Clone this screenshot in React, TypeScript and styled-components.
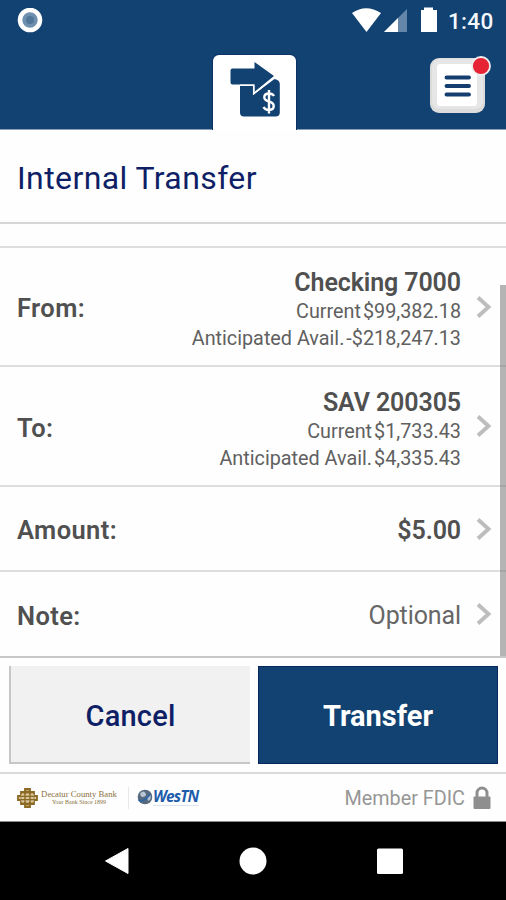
import React from "react";
import styled, { createGlobalStyle } from "styled-components";

const NAVY = "#124272";
const INK = "#0f1f66";

const GlobalStyle = createGlobalStyle`
  * { box-sizing: border-box; }
  body { margin: 0; background: #fff; font-family: Roboto, "Liberation Sans", sans-serif; }
  svg { display: block; flex: none; }
`;

const Screen = styled.div`
  width: 506px;
  height: 900px;
  display: flex;
  flex-direction: column;
  overflow: hidden;
  background: #fefefe;
`;

const StatusBar = styled.div`
  height: 42px;
  flex: none;
  display: flex;
  align-items: center;
  justify-content: space-between;
  padding: 0 12px 0 17px;
  background: ${NAVY};
`;

const StatusIcons = styled.div`
  display: flex;
  align-items: center;
`;

const Clock = styled.span`
  width: 46px;
  margin-left: 10px;
  color: #f4f7fb;
  font-size: 22.5px;
  font-weight: 500;
  line-height: 42px;
  letter-spacing: 0.3px;
  white-space: nowrap;
`;

const Header = styled.header`
  height: 88px;
  flex: none;
  display: grid;
  grid-template-columns: 213px 83px 1fr;
  align-items: end;
  background: ${NAVY};
  border-bottom: 1px solid #8a9db5;
`;

const TransferTab = styled.div`
  grid-column: 2;
  height: 75px;
  margin-bottom: -1px;
  border-radius: 6px 6px 0 0;
  background: #fff;
  box-shadow: 0 0 0 1px #0c3166;
  clip-path: inset(-2px -2px 0 -2px);
`;

const MenuButton = styled.button`
  justify-self: end;
  align-self: start;
  margin: 12px 12px 0 0;
  padding: 0;
  border: 0;
  background: none;
`;

const Title = styled.h1`
  height: 94px;
  flex: none;
  margin: 0;
  padding: 1px 17px 0;
  border-bottom: 2px solid #d6d6d6;
  color: ${INK};
  font-size: 32px;
  font-weight: 400;
  line-height: 95px;
  letter-spacing: 0.4px;
`;

const FormArea = styled.main`
  height: 434px;
  flex: none;
  display: grid;
  grid-template-columns: 1fr 6px;
  border-bottom: 2px solid #c8c8c8;
`;

const Rows = styled.div`
  padding-top: 22px;
  margin-right: -6px;
`;

const Row = styled.div<{ $h: number }>`
  height: ${(p) => p.$h}px;
  display: flex;
  align-items: center;
  padding: 0 14px 0 17px;
  border-top: 2px solid #dedede;
  color: #505050;
`;

const Label = styled.span`
  flex: 1;
  padding-top: 3px;
  font-size: 25.5px;
  font-weight: 600;
  line-height: 30px;
  letter-spacing: 0.4px;
`;

const ValueStack = styled.div`
  display: flex;
  flex-direction: column;
  align-items: flex-end;
  margin-right: 15px;
`;

const Value = styled.span<{ $light?: boolean }>`
  padding-top: ${(p) => (p.$light ? "3px" : "5px")};
  font-size: 25px;
  font-weight: ${(p) => (p.$light ? 400 : 600)};
  line-height: 30px;
  letter-spacing: -0.1px;
  color: ${(p) => (p.$light ? "#666" : "#505050")};
`;

const AccountName = styled(Value)`
  padding: 3px 0 0;
`;

const Balance = styled.span`
  display: flex;
  gap: 2px;
  font-size: 19.8px;
  line-height: 27px;
  color: #606060;

  &:last-child {
    margin-bottom: -4px;
  }
`;

const ScrollThumb = styled.div`
  z-index: 1;
  margin-top: 61px;
  background: rgba(100, 100, 100, 0.48);
`;

const Actions = styled.div`
  height: 114px;
  flex: none;
  display: grid;
  grid-template-columns: 241px 240px;
  gap: 8px;
  padding: 8px 0 8px 9px;
`;

const Action = styled.button<{ $primary?: boolean }>`
  padding: ${(p) => (p.$primary ? "2px 0 0" : "3px 0 0")};
  border-style: solid;
  border-width: ${(p) => (p.$primary ? "1px" : "0 0 2px 2px")};
  border-color: ${(p) => (p.$primary ? "#08275f" : "#c6c6c6")};
  background: ${(p) => (p.$primary ? NAVY : "#f1f1f1")};
  color: ${(p) => (p.$primary ? "#fff" : INK)};
  font: ${(p) => (p.$primary ? 700 : 500)} 29px Roboto, "Liberation Sans", sans-serif;
  letter-spacing: ${(p) => (p.$primary ? "0" : "0.2px")};
`;

const Footer = styled.footer`
  height: 50px;
  flex: none;
  display: flex;
  align-items: center;
  padding: 0 15px 0 17px;
  border-top: 2px solid #d9d9d9;
  border-bottom: 1px solid #8c8c8c;
`;

const BankName = styled.div`
  width: 76px;
  margin-left: 3px;
  text-align: center;
  white-space: nowrap;
  font-family: "Liberation Serif", serif;
  font-size: 8.7px;
  line-height: 9px;
  color: #8b7340;
`;

const BankMotto = styled.div`
  margin-top: -1px;
  font-size: 6px;
  line-height: 8px;
`;

const Divider = styled.div`
  width: 1px;
  height: 22px;
  margin: 0 8px 0 11px;
  background: #e8e8e8;
`;

const WestMark = styled.span`
  width: 46px;
  margin: -2px 0 0 0;
  font-family: "Open Sans", sans-serif;
  font-size: 15.5px;
  font-weight: 700;
  font-style: italic;
  line-height: 18px;
  letter-spacing: -0.9px;
  color: #1e5cab;
  border-bottom: 1px solid #dce3ee;
`;

const Member = styled.span`
  margin-left: auto;
  margin-right: 8px;
  padding-top: 2px;
  font-size: 19.8px;
  color: #969696;
`;

const NavBar = styled.nav`
  flex: 1;
  display: grid;
  grid-template-columns: repeat(3, 136.5px);
  justify-content: center;
  justify-items: center;
  align-items: center;
  background: #000;
`;

const Chevron = () => (
  <svg width="16" height="26" viewBox="0 0 16 26">
    <path d="M2 3.500 12.500 13 2 22.500" fill="none" stroke="#bdbdbd" strokeWidth="3.9" />
  </svg>
);

interface Account {
  label: string;
  name: string;
  current: string;
  available: string;
}

const accounts: Account[] = [
  { label: "From:", name: "Checking 7000", current: "$99,382.18", available: "-$218,247.13" },
  { label: "To:", name: "SAV 200305", current: "$1,733.43", available: "$4,335.43" },
];

export default function App() {
  return (
    <>
      <GlobalStyle />
      <Screen>
        <StatusBar>
          <svg width="26" height="26" viewBox="0 0 26 26">
            <circle cx="13" cy="12" r="10" fill="#6e8fae" stroke="#fff" strokeWidth="4.6" />
            <circle cx="13" cy="12" r="4" fill="#50769a" />
          </svg>
          <StatusIcons>
            <svg width="86" height="28" viewBox="0 0 86 28">
              <path d="M0 6Q14-3.500 29 6L14.500 25Z" fill="#fff" />
              <path d="M32 25 55 2V25Z" fill="#6486a9" />
              <path d="M32 25 46 11V25Z" fill="#fff" />
              <path d="M69 3h3V.5h9V3h4v22H69Z" fill="#fff" />
            </svg>
            <Clock>1:40</Clock>
          </StatusIcons>
        </StatusBar>
        <Header>
          <TransferTab>
            <svg width="83" height="75" viewBox="0 0 83 75">
              <path
                d="M27 30.500H40V40L61.500 24Q66.800 25 66.800 29V57.500Q66.800 61.500 62.500 61.500H31Q27 61.500 27 57.500Z"
                fill={NAVY}
              />
              <path
                d="M19.500 13.500H41.500V7L61 21 41.500 37V29.500H19.500q-2 0-2-2V15.500q0-2 2-2Z"
                fill={NAVY}
              />
              <path
                d="M27 30.200H40.700V38.800L61.500 22.200"
                fill="none"
                stroke="#fff"
                strokeWidth="1.5"
              />
              <path
                d="M61 41q-1.500-2.500-5-2.500-4.700 0-4.700 3.700 0 3 4.700 4.300t4.700 4.500q0 4-4.700 4-4 0-5.500-3M56 35v23.500"
                fill="none"
                stroke="#fff"
                strokeWidth="2.4"
              />
            </svg>
          </TransferTab>
          <MenuButton aria-label="Menu">
            <svg width="64" height="62" viewBox="0 0 64 62">
              <rect x="0" y="4" width="55" height="55" rx="9" fill="#dcdcdc" />
              <rect x="2" y="5" width="51" height="50" rx="8" fill="#e6e6e6" />
              <rect x="7" y="10" width="40" height="42" rx="3" fill="#fff" />
              <path
                d="M16.500 23.500H39M16.500 32H39M16.500 40.500H39"
                stroke="#143d70"
                strokeWidth="3.9"
                strokeLinecap="round"
              />
              <circle cx="51" cy="12" r="9" fill="#e52335" stroke="#eee" strokeWidth="1.8" />
            </svg>
          </MenuButton>
        </Header>
        <Title>Internal Transfer</Title>
        <FormArea>
          <Rows>
            {accounts.map((a) => (
              <Row key={a.label} $h={a.label === "From:" ? 119 : 120}>
                <Label>{a.label}</Label>
                <ValueStack>
                  <AccountName>{a.name}</AccountName>
                  <Balance>
                    <span>Current</span>
                    <span>{a.current}</span>
                  </Balance>
                  <Balance>
                    <span>Anticipated Avail.</span>
                    <span>{a.available}</span>
                  </Balance>
                </ValueStack>
                <Chevron />
              </Row>
            ))}
            <Row $h={85}>
              <Label>Amount:</Label>
              <ValueStack>
                <Value>$5.00</Value>
              </ValueStack>
              <Chevron />
            </Row>
            <Row $h={86}>
              <Label>Note:</Label>
              <ValueStack>
                <Value $light>Optional</Value>
              </ValueStack>
              <Chevron />
            </Row>
          </Rows>
          <ScrollThumb />
        </FormArea>
        <Actions>
          <Action>Cancel</Action>
          <Action $primary>Transfer</Action>
        </Actions>
        <Footer>
          <svg width="21" height="20" viewBox="0 0 21 20">
            <path
              d="M8 1h5v18H8ZM4 4h13v12H4ZM1 8h19v4H1Z"
              fill="#c0a46a"
              stroke="#8b6a25"
              strokeWidth="1.8"
            />
            <path d="M4 7h13M2 10h17M4 13h13" stroke="#f3e8cc" strokeWidth="1" />
            <path d="M8 4v12M13 4v12" stroke="#8b6a25" strokeWidth="1.2" />
          </svg>
          <BankName>
            Decatur County Bank
            <BankMotto>Your Bank Since 1899</BankMotto>
          </BankName>
          <Divider />
          <svg width="16" height="18" viewBox="0 0 15 18">
            <circle cx="7.500" cy="8" r="7.300" fill="#56697e" />
            <path d="M3 4q3-3 5 0t-3 4q-3-1-2-4ZM9 8l4-2q1 4-2 6Z" fill="#b9c6d3" />
            <path d="M1 11q5 3 12-6" fill="none" stroke="#2a65a8" strokeWidth="1.5" />
          </svg>
          <WestMark>WesTN</WestMark>
          <Member>Member FDIC</Member>
          <svg width="18" height="24" viewBox="0 0 18 24">
            <path d="M4 12V7a5 5 0 0 1 10 0v5" fill="none" stroke="#8f8f8f" strokeWidth="3" />
            <rect x="0.500" y="10.500" width="17" height="12.500" rx="1" fill="#8f8f8f" />
          </svg>
        </Footer>
        <NavBar>
          <svg width="28" height="28" viewBox="0 0 28 28">
            <path d="M2.500 14 25 1.500V26.500Z" fill="#fff" stroke="#fff" strokeLinejoin="round" />
          </svg>
          <svg width="28" height="28" viewBox="0 0 28 28">
            <circle cx="14" cy="14" r="13.500" fill="#fff" />
          </svg>
          <svg width="28" height="28" viewBox="0 0 28 28">
            <rect x="1" y="1.500" width="26" height="25.500" rx="1.500" fill="#fff" />
          </svg>
        </NavBar>
      </Screen>
    </>
  );
}
